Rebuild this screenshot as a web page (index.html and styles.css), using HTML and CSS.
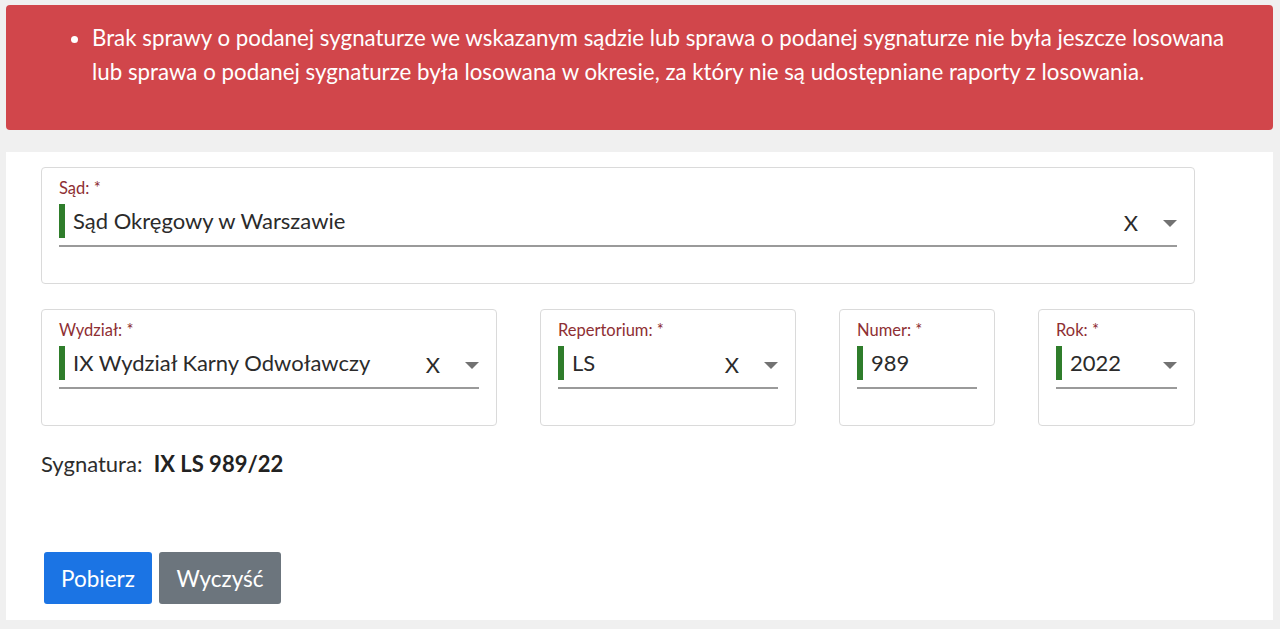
FILE: index.html
```html
<!DOCTYPE html>
<html lang="pl">
<head>
<meta charset="utf-8">
<title>Losowanie</title>
<link rel="stylesheet" href="styles.css">
</head>
<body>
<div class="alert">
  <ul>
    <li>Brak sprawy o podanej sygnaturze we wskazanym sądzie lub sprawa o podanej sygnaturze nie była jeszcze losowana lub sprawa o podanej sygnaturze była losowana w okresie, za który nie są udostępniane raporty z losowania.</li>
  </ul>
</div>
<main class="panel">
  <div class="field field-full">
    <label class="label">Sąd: *</label>
    <div class="control">
      <span class="bar"></span>
      <span class="value">Sąd Okręgowy w Warszawie</span>
      <span class="clear">X</span>
      <span class="caret"></span>
    </div>
  </div>
  <div class="row">
    <div class="field">
      <label class="label">Wydział: *</label>
      <div class="control">
        <span class="bar"></span>
        <span class="value">IX Wydział Karny Odwoławczy</span>
        <span class="clear">X</span>
        <span class="caret"></span>
      </div>
    </div>
    <div class="field">
      <label class="label">Repertorium: *</label>
      <div class="control">
        <span class="bar"></span>
        <span class="value">LS</span>
        <span class="clear">X</span>
        <span class="caret"></span>
      </div>
    </div>
    <div class="field">
      <label class="label">Numer: *</label>
      <div class="control">
        <span class="bar"></span>
        <span class="value">989</span>
      </div>
    </div>
    <div class="field">
      <label class="label">Rok: *</label>
      <div class="control">
        <span class="bar"></span>
        <span class="value">2022</span>
        <span class="caret"></span>
      </div>
    </div>
  </div>
  <p class="sygnatura">Sygnatura:&nbsp; <strong>IX LS 989/22</strong></p>
  <div class="buttons">
    <button class="btn btn-primary">Pobierz</button>
    <button class="btn btn-secondary">Wyczyść</button>
  </div>
</main>
</body>
</html>
```
FILE: styles.css
```css
html, body {
  margin: 0;
  padding: 0;
}
body {
  background: #f0f0f0;
  font-family: "Lato", "Liberation Sans", sans-serif;
  color: #2d2d2d;
  padding: 5px 7px 9px 6px;
  height: 629px;
  box-sizing: border-box;
}
.alert {
  background: #d1464b;
  color: #fff;
  border-radius: 4px;
  height: 125px;
  box-sizing: border-box;
  padding-top: 16px;
}
.alert ul {
  margin: 0;
  padding: 0 40px 0 86px;
}
.alert li {
  font-size: 22.3px;
  line-height: 34px;
}
.panel {
  margin-top: 22px;
  background: #fff;
  height: 468px;
  box-sizing: border-box;
  padding: 15px 0 0 35px;
}
.field {
  border: 1px solid #dadada;
  border-radius: 4px;
  height: 117px;
  box-sizing: border-box;
  padding: 10px 17px 0;
}
.field-full {
  width: 1154px;
}
.label {
  display: block;
  font-size: 16.5px;
  line-height: 20px;
  color: #8e2f33;
}
.control {
  display: flex;
  align-items: flex-start;
  margin-top: 4px;
  padding-top: 2px;
  border-bottom: 2px solid #9a9a9a;
  box-sizing: border-box;
  height: 45px;
}
.bar {
  width: 6px;
  height: 34px;
  background: #2f7d2b;
  margin-right: 8px;
  flex: none;
}
.value {
  flex: 1;
  font-size: 22px;
  line-height: 34px;
  color: #2b2b2b;
}
.clear {
  font-size: 22px;
  line-height: 34px;
  color: #2b2b2b;
  margin-right: 25px;
  margin-top: 2px;
}
.caret {
  width: 0;
  height: 0;
  border-left: 7px solid transparent;
  border-right: 7px solid transparent;
  border-top: 7px solid #727272;
  margin-top: 16px;
}
.row {
  display: grid;
  grid-template-columns: 456px 256px 156px 157px;
  column-gap: 43px;
  margin-top: 25px;
}
.sygnatura {
  margin: 25px 0 0;
  font-size: 22px;
  line-height: 26px;
}
.sygnatura strong {
  font-weight: 700;
  color: #222;
}
.buttons {
  display: flex;
  gap: 7px;
  margin-top: 75px;
  padding-left: 3px;
}
.btn {
  font-family: "Lato", "Liberation Sans", sans-serif;
  font-size: 22.5px;
  color: #fff;
  border: none;
  border-radius: 3px;
  height: 52px;
  padding: 0;
  cursor: pointer;
}
.btn-primary {
  background: #1b74e4;
  width: 108px;
}
.btn-secondary {
  background: #6c757d;
  width: 122px;
}
```
